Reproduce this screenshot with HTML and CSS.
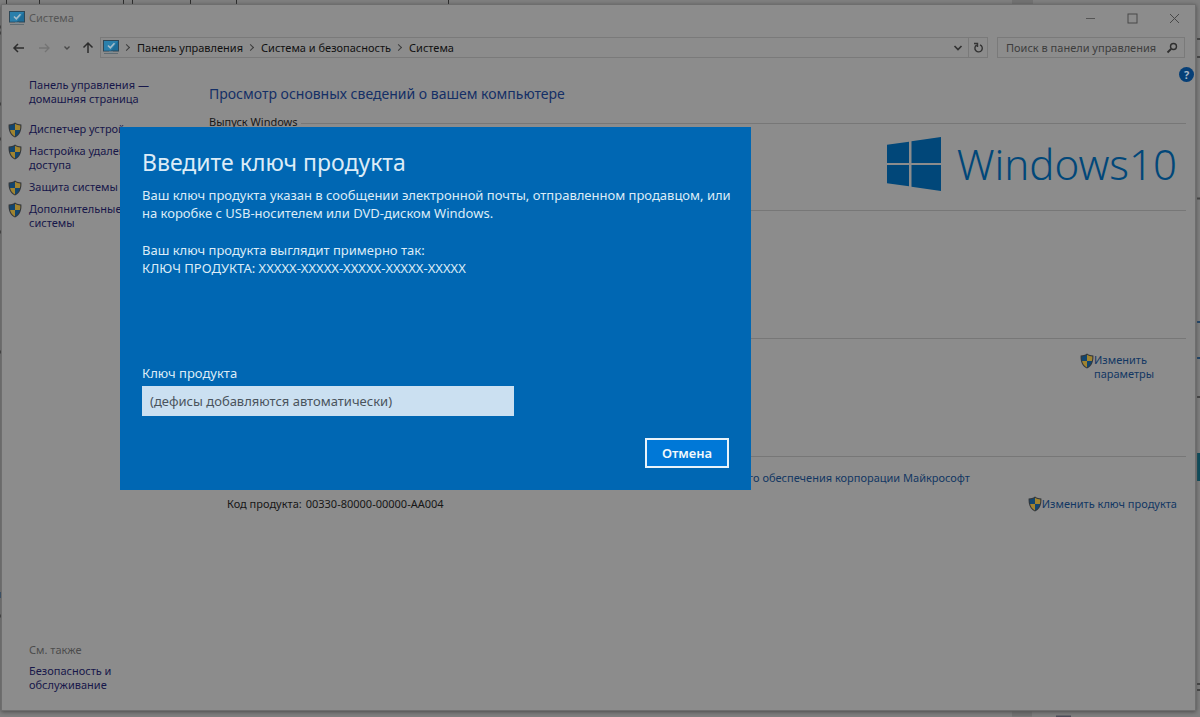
FILE: index.html
```html
<!DOCTYPE html>
<html lang="ru">
<head>
<meta charset="utf-8">
<meta name="viewport" content="width=device-width, initial-scale=1">
<title>Система</title>
<link rel="stylesheet" href="styles.css">
</head>
<body>
<svg class="defs" width="0" height="0" aria-hidden="true">
  <symbol id="shield" viewBox="0 0 14 16">
    <path d="M7 0.5C5 2 3 2.4 0.6 2.5C0.3 8 1.6 12.8 7 15.6C12.4 12.8 13.7 8 13.4 2.5C11 2.4 9 2 7 0.5Z" fill="#34383c"/>
    <path d="M7 1.8C5.3 3 3.6 3.4 1.7 3.5C1.6 5.2 1.7 6.6 2.1 8H7Z" fill="#12466f"/>
    <path d="M7 1.8C8.7 3 10.4 3.4 12.3 3.5C12.4 5.2 12.3 6.6 11.9 8H7Z" fill="#a08430"/>
    <path d="M2.1 8H7V14.4C4.3 13 2.7 10.8 2.1 8Z" fill="#a08430"/>
    <path d="M11.9 8H7V14.4C9.7 13 11.3 10.8 11.9 8Z" fill="#12466f"/>
  </symbol>
  <symbol id="monitor" viewBox="0 0 16 15">
    <rect x="0.5" y="0.5" width="15" height="10.5" fill="#1d6c98" stroke="#2d4757"/>
    <path d="M1 1H15L8 10.5H1Z" fill="#2a7fab"/>
    <path d="M5 5.5L7.3 7.8L11.5 3.3" fill="none" stroke="#a6bcc8" stroke-width="1.6"/>
    <path d="M6 11.500H10V13H6Z" fill="#7d8d94"/>
    <path d="M1 13.500H15" stroke="#5f6c73"/>
  </symbol>
</svg>

<svg class="desktop" aria-hidden="true">
  <path d="M6.500 0V4M39.500 0V4M123.500 0V4M132.500 0V4M190.500 0V4M236.500 0V4M448.500 0V4" stroke="#2c2c2c"/>
  <path d="M1012 1.500H1033M1012 714H1032" stroke="#727272" stroke-width="5"/>
  <path d="M0 27H1M0 33H1M0 104H1M0 139H1M0 232H1M0 352H1M0 616H1" stroke="#3d3d3d" stroke-width="3"/>
  <path d="M0 595H1" stroke="#315475" stroke-width="6"/>
  <path d="M1197 39H1200M1197 57H1200M1197 198.500H1200M1197 397H1200M1197 684H1200M1197 690H1200" stroke="#444" stroke-width="2"/>
  <path d="M1197 322H1200M1197 358H1200" stroke="#1f4469" stroke-width="2"/>
  <path d="M1197 453H1200V481H1197Z" fill="#0b4c5c"/>
  <path d="M1056 716.500H1071" stroke="#4d4d59" stroke-width="2"/>
</svg>

<div class="window">
  <header class="titlebar">
    <svg class="icon-monitor"><use href="#monitor"/></svg>
    <span class="titlebar-text">Система</span>
    <div class="caption-buttons">
      <button type="button" aria-label="Свернуть"><svg width="11" height="11" viewBox="0 0 11 11"><path d="M1 5.500H10" stroke="#555"/></svg></button>
      <button type="button" aria-label="Развернуть"><svg width="11" height="11" viewBox="0 0 11 11"><rect x="1" y="1" width="9" height="9" fill="none" stroke="#484848"/></svg></button>
      <button type="button" aria-label="Закрыть"><svg width="11" height="11" viewBox="0 0 11 11"><path d="M1 1L10 10M10 1L1 10" stroke="#484848"/></svg></button>
    </div>
  </header>

  <nav class="toolbar">
    <div class="history">
      <button type="button" aria-label="Назад"><svg width="14" height="12" viewBox="0 0 14 12"><path d="M12 6H2M6 2L2 6L6 10" fill="none" stroke="#2d2d2d" stroke-width="1.500"/></svg></button>
      <button type="button" aria-label="Вперед"><svg width="14" height="12" viewBox="0 0 14 12"><path d="M2 6H12M8 2L12 6L8 10" fill="none" stroke="#747474" stroke-width="1.300"/></svg></button>
      <button type="button" aria-label="Журнал"><svg width="8" height="6" viewBox="0 0 8 6"><path d="M1.500 1.500L4 4L6.500 1.500" fill="none" stroke="#494949" stroke-width="1.400"/></svg></button>
      <button type="button" aria-label="Вверх"><svg width="12" height="13" viewBox="0 0 12 13"><path d="M6 12V2M1.500 6.500L6 2L10.500 6.500" fill="none" stroke="#2d2d2d" stroke-width="1.500"/></svg></button>
    </div>
    <div class="address">
      <svg class="icon-monitor"><use href="#monitor"/></svg>
      <ol class="crumbs">
        <li><a href="#">Панель управления</a></li>
        <li><a href="#">Система и безопасность</a></li>
        <li><a href="#">Система</a></li>
      </ol>
      <button type="button" class="address-drop" aria-label="Предыдущие расположения"><svg width="10" height="8" viewBox="0 0 10 8"><path d="M1.500 2L5 5.500L8.500 2" fill="none" stroke="#333" stroke-width="1.700"/></svg></button>
      <button type="button" class="address-refresh" aria-label="Обновить"><svg width="11" height="12" viewBox="0 0 11 12"><path d="M7 2.800A3.700 3.700 0 1 1 3.600 3.100M1 1.500H4.500V5" fill="none" stroke="#333" stroke-width="1.400"/></svg></button>
    </div>
    <div class="search">
      <input type="search" aria-label="Поиск" placeholder="Поиск в панели управления">
      <svg width="12" height="12" viewBox="0 0 12 12" aria-hidden="true"><circle cx="7.500" cy="4.500" r="3" fill="none" stroke="#2f2f2f" stroke-width="1.400"/><path d="M5 7L1.500 10.500" stroke="#2f2f2f" stroke-width="1.800"/></svg>
    </div>
  </nav>

  <div class="content">
    <aside class="sidebar">
      <a class="home" href="#">Панель управления — домашняя страница</a>
      <ul class="tasks">
        <li><svg class="shield"><use href="#shield"/></svg><a href="#">Диспетчер устройств</a></li>
        <li><svg class="shield"><use href="#shield"/></svg><a href="#">Настройка удаленного<br>доступа</a></li>
        <li><svg class="shield"><use href="#shield"/></svg><a href="#">Защита системы</a></li>
        <li><svg class="shield"><use href="#shield"/></svg><a href="#">Дополнительные параметры<br>системы</a></li>
      </ul>
      <div class="see-also">
        <span>См. также</span>
        <a href="#">Безопасность и обслуживание</a>
      </div>
    </aside>

    <main class="main">
      <button type="button" class="help" aria-label="Справка">?</button>
      <h1>Просмотр основных сведений о вашем компьютере</h1>
      <section class="edition">
        <h2>Выпуск Windows</h2>
        <div class="brand">
          <svg width="54" height="54" viewBox="0 0 54 54" aria-hidden="true"><path d="M0 7.700L22 4.700V26H0ZM24.500 4.300L54 0V26H24.500ZM0 28H22V49.300L0 46.300ZM24.500 28H54V54L24.500 49.700Z" fill="#014779"/></svg>
          <span class="brand-name">Windows<span>10</span></span>
        </div>
      </section>
      <section class="rule system"></section>
      <section class="rule computer">
        <svg class="shield"><use href="#shield"/></svg><a href="#">Изменить параметры</a>
      </section>
      <section class="rule activation">
        <a class="license" href="#">Условия лицензии на использование программного обеспечения корпорации Майкрософт</a>
        <div class="product">
          <span>Код продукта:</span><span>00330-80000-00000-AA004</span>
          <div class="change-key"><svg class="shield"><use href="#shield"/></svg><a href="#">Изменить ключ продукта</a></div>
        </div>
      </section>
    </main>
  </div>
</div>

<form class="dialog" role="dialog" aria-labelledby="dialog-title">
  <h2 id="dialog-title">Введите ключ продукта</h2>
  <p>Ваш ключ продукта указан в сообщении электронной почты, отправленном продавцом, или на коробке с USB-носителем или DVD-диском Windows.</p>
  <p>Ваш ключ продукта выглядит примерно так:<br>КЛЮЧ ПРОДУКТА: XXXXX-XXXXX-XXXXX-XXXXX-XXXXX</p>
  <div class="field">
    <label for="key">Ключ продукта</label>
    <input id="key" type="text" placeholder="(дефисы добавляются автоматически)">
  </div>
  <button type="button" class="cancel">Отмена</button>
</form>
</body>
</html>
```
FILE: styles.css
```css
* { box-sizing: border-box; }

body {
  margin: 0;
  min-height: 100vh;
  padding: 4px 4px 6px 1px;
  display: flex;
  background: #7f7f7f;
  color: #161616;
  font-family: "Noto Sans", "Open Sans", sans-serif;
  font-size: 11px;
  line-height: 14px;
  overflow: hidden;
}

a { color: #123763; text-decoration: none; }
button { padding: 0; border: 0; background: none; font: inherit; color: inherit; display: flex; align-items: center; justify-content: center; }
h1, h2, p, ul, ol { margin: 0; padding: 0; font-weight: 400; }
ul, ol { list-style: none; }
svg { flex: none; }

.defs { position: absolute; }
.desktop { position: absolute; inset: 0; width: 100%; height: 100%; }
.icon-monitor { width: 16px; height: 15px; }
.shield { width: 14px; height: 16px; }

.window {
  position: relative;
  flex: 1;
  display: flex;
  flex-direction: column;
  background: #8c8c8c;
  border: 1px solid #6e6e6e;
  box-shadow: 0 1px 4px #4c4c4c;
}

.titlebar { display: flex; align-items: center; height: 26px; padding-left: 7px; gap: 4px; color: #565656; }
.caption-buttons { margin-left: auto; display: flex; }
.caption-buttons button { width: 42px; height: 26px; }

.toolbar { display: flex; align-items: center; height: 33px; padding: 0 10px; }
.history { display: flex; align-items: center; justify-content: space-between; width: 82px; margin-right: 6px; }
.address { flex: 1; display: flex; align-items: center; height: 21px; border: 1px solid #7a7a7a; padding-left: 2px; margin-right: 9px; }
.crumbs { display: flex; flex: 1; }
.crumbs li { display: flex; align-items: center; }
.crumbs li::before { content: ""; width: 4px; height: 4px; margin: 0 8px 0 5px; border: solid #3c3c3c; border-width: 1px 1px 0 0; transform: rotate(45deg); }
.crumbs a { color: #111; }
.address-drop { width: 20px; height: 19px; }
.address-refresh { width: 19px; height: 19px; border-left: 1px solid #7a7a7a; }
.search { display: flex; align-items: center; width: 188px; height: 21px; border: 1px solid #7a7a7a; padding: 0 6px 0 8px; }
.search input { flex: 1; min-width: 0; padding: 0; border: 0; outline: 0; background: none; font: inherit; color: #333; appearance: none; }
.search input::placeholder { color: #3d3d3d; opacity: 1; }
.search input::-webkit-search-cancel-button { display: none; }

.content { flex: 1; display: flex; }
.sidebar { width: 181px; padding: 14px 0 18px 6px; display: flex; flex-direction: column; }
.sidebar a { color: #17174a; }
.home { padding-left: 21px; width: 150px; }
.tasks { display: flex; flex-direction: column; gap: 8px; margin-top: 16px; }
.tasks li { display: flex; gap: 7px; align-items: flex-start; white-space: nowrap; }
.tasks .shield { margin-bottom: -2px; }
.see-also { margin-top: auto; padding-left: 21px; display: flex; flex-direction: column; gap: 7px; color: #4c4c4c; }
.see-also a { width: 100px; }

.main { position: relative; flex: 1; padding: 20px 9px 0 26px; }
.help { position: absolute; top: 3px; right: 1px; width: 15px; height: 15px; border-radius: 50%; background: #063f77; color: #a9b8c6; font-weight: 700; }
h1 { font-size: 14px; line-height: 20px; color: #142f66; }

.edition { padding-top: 11px; height: 106px; }
.edition h2 { display: flex; align-items: center; gap: 3px; font-size: 11px; line-height: 14px; }
.edition h2::after { content: ""; flex: 1; height: 1px; margin-top: 3px; background: #777; }
.brand { display: flex; justify-content: flex-end; align-items: center; gap: 16px; padding: 8px 9px 0 0; color: #014779; }
.brand-name { font-size: 42px; line-height: 54px; font-weight: 300; display: flex; }

.rule { border-top: 1px solid #777; }
.system { height: 128px; }
.computer { height: 118px; display: flex; justify-content: flex-end; padding-top: 14px; }
.computer a { width: 92px; }
.activation { padding: 14px 9px 0 18px; }
.license { display: block; text-align: right; padding-right: 207px; }
.product { display: flex; align-items: center; gap: 4px; margin-top: 11px; }
.change-key { margin-left: auto; display: flex; align-items: center; }

.dialog {
  position: absolute;
  left: 120px;
  top: 127px;
  width: 631px;
  padding: 20px 22px 22px;
  display: flex;
  flex-direction: column;
  background: #0067b3;
  color: #dcecf7;
  font-size: 13px;
  line-height: 18px;
}
.dialog h2 { font-size: 23px; line-height: 30px; margin-bottom: 9px; }
.dialog p { margin: 0 -16px 19px 0; }
.field { display: flex; flex-direction: column; gap: 4px; margin-top: 68px; }
.field input { width: 372px; height: 30px; padding: 0 8px; border: 0; background: #cbe0f1; color: #333; font: inherit; }
.field input::placeholder { color: #4a545d; opacity: 1; }
.cancel { align-self: flex-end; width: 84px; height: 30px; margin-top: 22px; border: 2px solid #e8f3fa; background: #0078d7; color: #f2f8fc; font-weight: 600; }
```
